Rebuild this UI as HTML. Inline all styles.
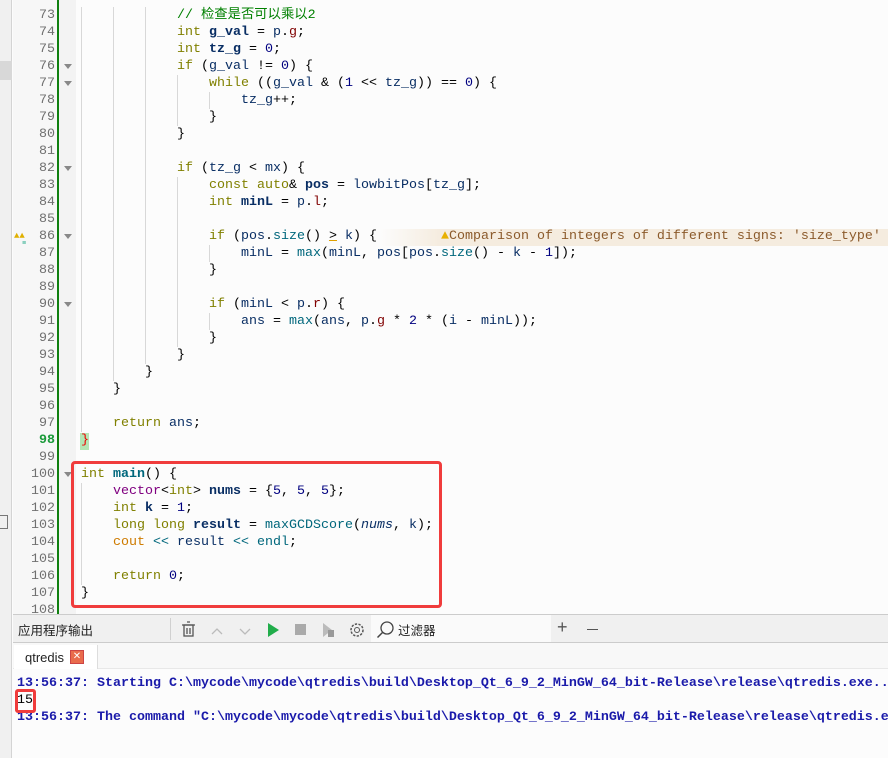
<!DOCTYPE html>
<html><head><meta charset="utf-8"><style>
*{margin:0;padding:0;box-sizing:border-box}
body{width:888px;height:758px;overflow:hidden;background:#fcfcfc;position:relative;font-family:"Liberation Mono","Noto Sans CJK SC",monospace}
.ls{position:absolute;left:0;top:0;width:12px;height:758px;background:#f0f0f0;border-right:1px solid #d4d4d4}
.ln{position:absolute;left:13px;width:42px;text-align:right;font-size:13.33px;color:#707070;height:17px;line-height:17px}
.code{position:absolute;left:81px;font-size:13.33px;height:17px;line-height:17px;white-space:pre;color:#000}
.k{color:#808000}.v{color:#092e64}.b{color:#092e64;font-weight:bold}.n{color:#000080}.f{color:#00677c}.m{color:#800000}.c{color:#008000}.t{color:#800080}.o{color:#ce7b00}
.g{position:absolute;width:1px;background:#d8d8d8}
.fold{position:absolute;left:64px;width:0;height:0;border-left:4px solid transparent;border-right:4px solid transparent;border-top:5px solid #888}
</style></head><body>
<div class="ls"></div>
<div style="position:absolute;left:0;top:61px;width:12px;height:19px;background:#d8d8d8"></div>
<div style="position:absolute;left:0;top:515px;width:8px;height:14px;border:1px solid #777;border-left:none"></div>
<div style="position:absolute;left:13px;top:0;width:45px;height:614px;background:#f7f7f7"></div>
<div style="position:absolute;left:57px;top:0;width:2px;height:614px;background:#108010"></div>
<div style="position:absolute;left:59px;top:0;width:17px;height:614px;background:#f3f3f3"></div>
<div style="position:absolute;left:14px;top:231px;font-size:9px;color:#e0b000">▲▲</div>
<div style="position:absolute;left:22px;top:240px;font-size:7px;color:#2a8">≡</div>
<div id="nums"></div>
<div id="guides"></div>
<div style="position:absolute;left:80px;top:433px;width:9px;height:17px;background:#b4e6b4"></div>
<div style="position:absolute;left:380px;top:229px;width:508px;height:17px;background:linear-gradient(90deg,#fcfcfc,#f5ecdf 60px)"></div>
<div id="code"></div>
<div style="position:absolute;left:71px;top:461px;width:371px;height:147px;border:3px solid #f03c3c;border-radius:4px"></div>

<div style="position:absolute;left:13px;top:614px;width:875px;height:29px;background:#f0f0f0;border-top:1px solid #ccc;border-bottom:1px solid #ccc"></div>
<div style="position:absolute;left:18px;top:620px;font-family:'Liberation Sans','Noto Sans CJK SC',sans-serif;font-size:12.5px;color:#222">应用程序输出</div>
<div style="position:absolute;left:170px;top:618px;width:1px;height:22px;background:#d0d0d0"></div>
<svg style="position:absolute;left:180px;top:620px" width="190" height="20">
<g fill="none" stroke="#555" stroke-width="1.3"><rect x="4" y="5" width="9" height="11"/><path d="M2 5h13M7 2h3M7 8v6M10 8v6"/></g>
<path d="M32 14l5-5 5 5" stroke="#bbb" fill="none" stroke-width="1.3"/>
<path d="M60 9l5 5 5-5" stroke="#bbb" fill="none" stroke-width="1.3"/>
<path d="M88 3l11 7-11 7z" fill="#21ad4b"/>
<rect x="115" y="4" width="11" height="11" fill="#aaa"/>
<path d="M143 3l9 7-9 7z" fill="#bbb"/><rect x="148" y="10" width="6" height="7" fill="#999"/>
<circle cx="177" cy="10" r="6" stroke="#555" fill="none" stroke-width="1.5" stroke-dasharray="2.3 1.4"/><circle cx="177" cy="10" r="2.5" stroke="#555" fill="none"/>
</svg>
<div style="position:absolute;left:371px;top:615px;width:180px;height:27px;background:#fafafa"></div>
<svg style="position:absolute;left:376px;top:620px" width="20" height="20"><circle cx="11" cy="8" r="6" stroke="#444" fill="none" stroke-width="1.3"/><path d="M6.5 12.5l-5 5" stroke="#444" stroke-width="1.5"/></svg>
<div style="position:absolute;left:398px;top:620px;font-family:'Liberation Sans','Noto Sans CJK SC',sans-serif;font-size:12.5px;color:#222">过滤器</div>
<div style="position:absolute;left:557px;top:617px;font-family:'Liberation Sans',sans-serif;font-size:18px;color:#555">+</div>
<div style="position:absolute;left:587px;top:629px;width:11px;height:1px;background:#555"></div>

<div style="position:absolute;left:13px;top:643px;width:875px;height:26px;background:#f8f8f8;border-bottom:1px solid #e8e8e8"></div>
<div style="position:absolute;left:14px;top:645px;width:84px;height:24px;background:#fff;border-right:1px solid #ddd"></div>
<div style="position:absolute;left:25px;top:650px;font-family:'Liberation Sans',sans-serif;font-size:13px;color:#222">qtredis</div>
<div style="position:absolute;left:70px;top:650px;width:14px;height:14px;background:#e96b4c;border:1px solid #c44;color:#fff;font:10px/12px 'Liberation Sans',sans-serif;text-align:center">✕</div>
<div style="position:absolute;left:17px;top:675px;font-size:13.33px;line-height:17px;font-weight:bold;color:#1a1aaa;white-space:pre">13:56:37: Starting C:\mycode\mycode\qtredis\build\Desktop_Qt_6_9_2_MinGW_64_bit-Release\release\qtredis.exe...
<span style="color:#000;font-weight:normal">15</span>
13:56:37: The command "C:\mycode\mycode\qtredis\build\Desktop_Qt_6_9_2_MinGW_64_bit-Release\release\qtredis.exe"</div>
<div style="position:absolute;left:15px;top:689px;width:21px;height:24px;border:3px solid #f03c3c;border-radius:3px"></div>

<script>
var L={
73:'            <span class="c">// 检查是否可以乘以2</span>',
74:'            <span class="k">int</span> <span class="b">g_val</span> = <span class="v">p</span>.<span class="m">g</span>;',
75:'            <span class="k">int</span> <span class="b">tz_g</span> = <span class="n">0</span>;',
76:'            <span class="k">if</span> (<span class="v">g_val</span> != <span class="n">0</span>) {',
77:'                <span class="k">while</span> ((<span class="v">g_val</span> &amp; (<span class="n">1</span> &lt;&lt; <span class="v">tz_g</span>)) == <span class="n">0</span>) {',
78:'                    <span class="v">tz_g</span>++;',
79:'                }',
80:'            }',
82:'            <span class="k">if</span> (<span class="v">tz_g</span> &lt; <span class="v">mx</span>) {',
83:'                <span class="k">const</span> <span class="k">auto</span>&amp; <span class="b">pos</span> = <span class="v">lowbitPos</span>[<span class="v">tz_g</span>];',
84:'                <span class="k">int</span> <span class="b">minL</span> = <span class="v">p</span>.<span class="m">l</span>;',
86:'                <span class="k">if</span> (<span class="v">pos</span>.<span class="f">size</span>() <span style="text-decoration:underline;text-decoration-color:#e0a000">&gt;</span> <span class="v">k</span>) {        <span style="color:#8b5a2b"><span style="color:#e8b000">▲</span>Comparison of integers of different signs: \'size_type\'</span>',
87:'                    <span class="v">minL</span> = <span class="f">max</span>(<span class="v">minL</span>, <span class="v">pos</span>[<span class="v">pos</span>.<span class="f">size</span>() - <span class="v">k</span> - <span class="n">1</span>]);',
88:'                }',
90:'                <span class="k">if</span> (<span class="v">minL</span> &lt; <span class="v">p</span>.<span class="m">r</span>) {',
91:'                    <span class="v">ans</span> = <span class="f">max</span>(<span class="v">ans</span>, <span class="v">p</span>.<span class="m">g</span> * <span class="n">2</span> * (<span class="v">i</span> - <span class="v">minL</span>));',
92:'                }',
93:'            }',
94:'        }',
95:'    }',
97:'    <span class="k">return</span> <span class="v">ans</span>;',
98:'<span style="color:#e00">}</span>',
100:'<span class="k">int</span> <span class="b" style="color:#00677c">main</span>() {',
101:'    <span class="t">vector</span>&lt;<span class="k">int</span>&gt; <span class="b">nums</span> = {<span class="n">5</span>, <span class="n">5</span>, <span class="n">5</span>};',
102:'    <span class="k">int</span> <span class="b">k</span> = <span class="n">1</span>;',
103:'    <span class="k">long</span> <span class="k">long</span> <span class="b">result</span> = <span class="f">maxGCDScore</span>(<span class="v"><i>nums</i></span>, <span class="v">k</span>);',
104:'    <span class="o">cout</span> <span class="f">&lt;&lt;</span> <span class="v">result</span> <span class="f">&lt;&lt;</span> <span class="f">endl</span>;',
106:'    <span class="k">return</span> <span class="n">0</span>;',
107:'}'};
var h='',c='';
for(var i=73;i<=108;i++){var t=7+(i-73)*17;
h+='<div class="ln" style="top:'+t+'px;'+(i==98?'color:#1a9a3a;font-weight:bold':'')+'">'+i+'</div>';
if(L[i])c+='<div class="code" style="top:'+t+'px">'+L[i]+'</div>';}
[76,77,82,86,90,100].forEach(function(i){h+='<div class="fold" style="top:'+(13+(i-73)*17)+'px"></div>'});
document.getElementById('nums').innerHTML=h;
document.getElementById('code').innerHTML=c;
var g='';
function G(x,a,b){g+='<div class="g" style="left:'+x+'px;top:'+(7+(a-73)*17)+'px;height:'+((b-a+1)*17)+'px"></div>'}
G(81,73,97);G(113,73,94);G(145,73,93);G(177,77,79);G(209,78,78);G(177,83,92);G(209,87,87);G(209,91,91);G(81,101,106);
document.getElementById('guides').innerHTML=g;
</script>
</body></html>
